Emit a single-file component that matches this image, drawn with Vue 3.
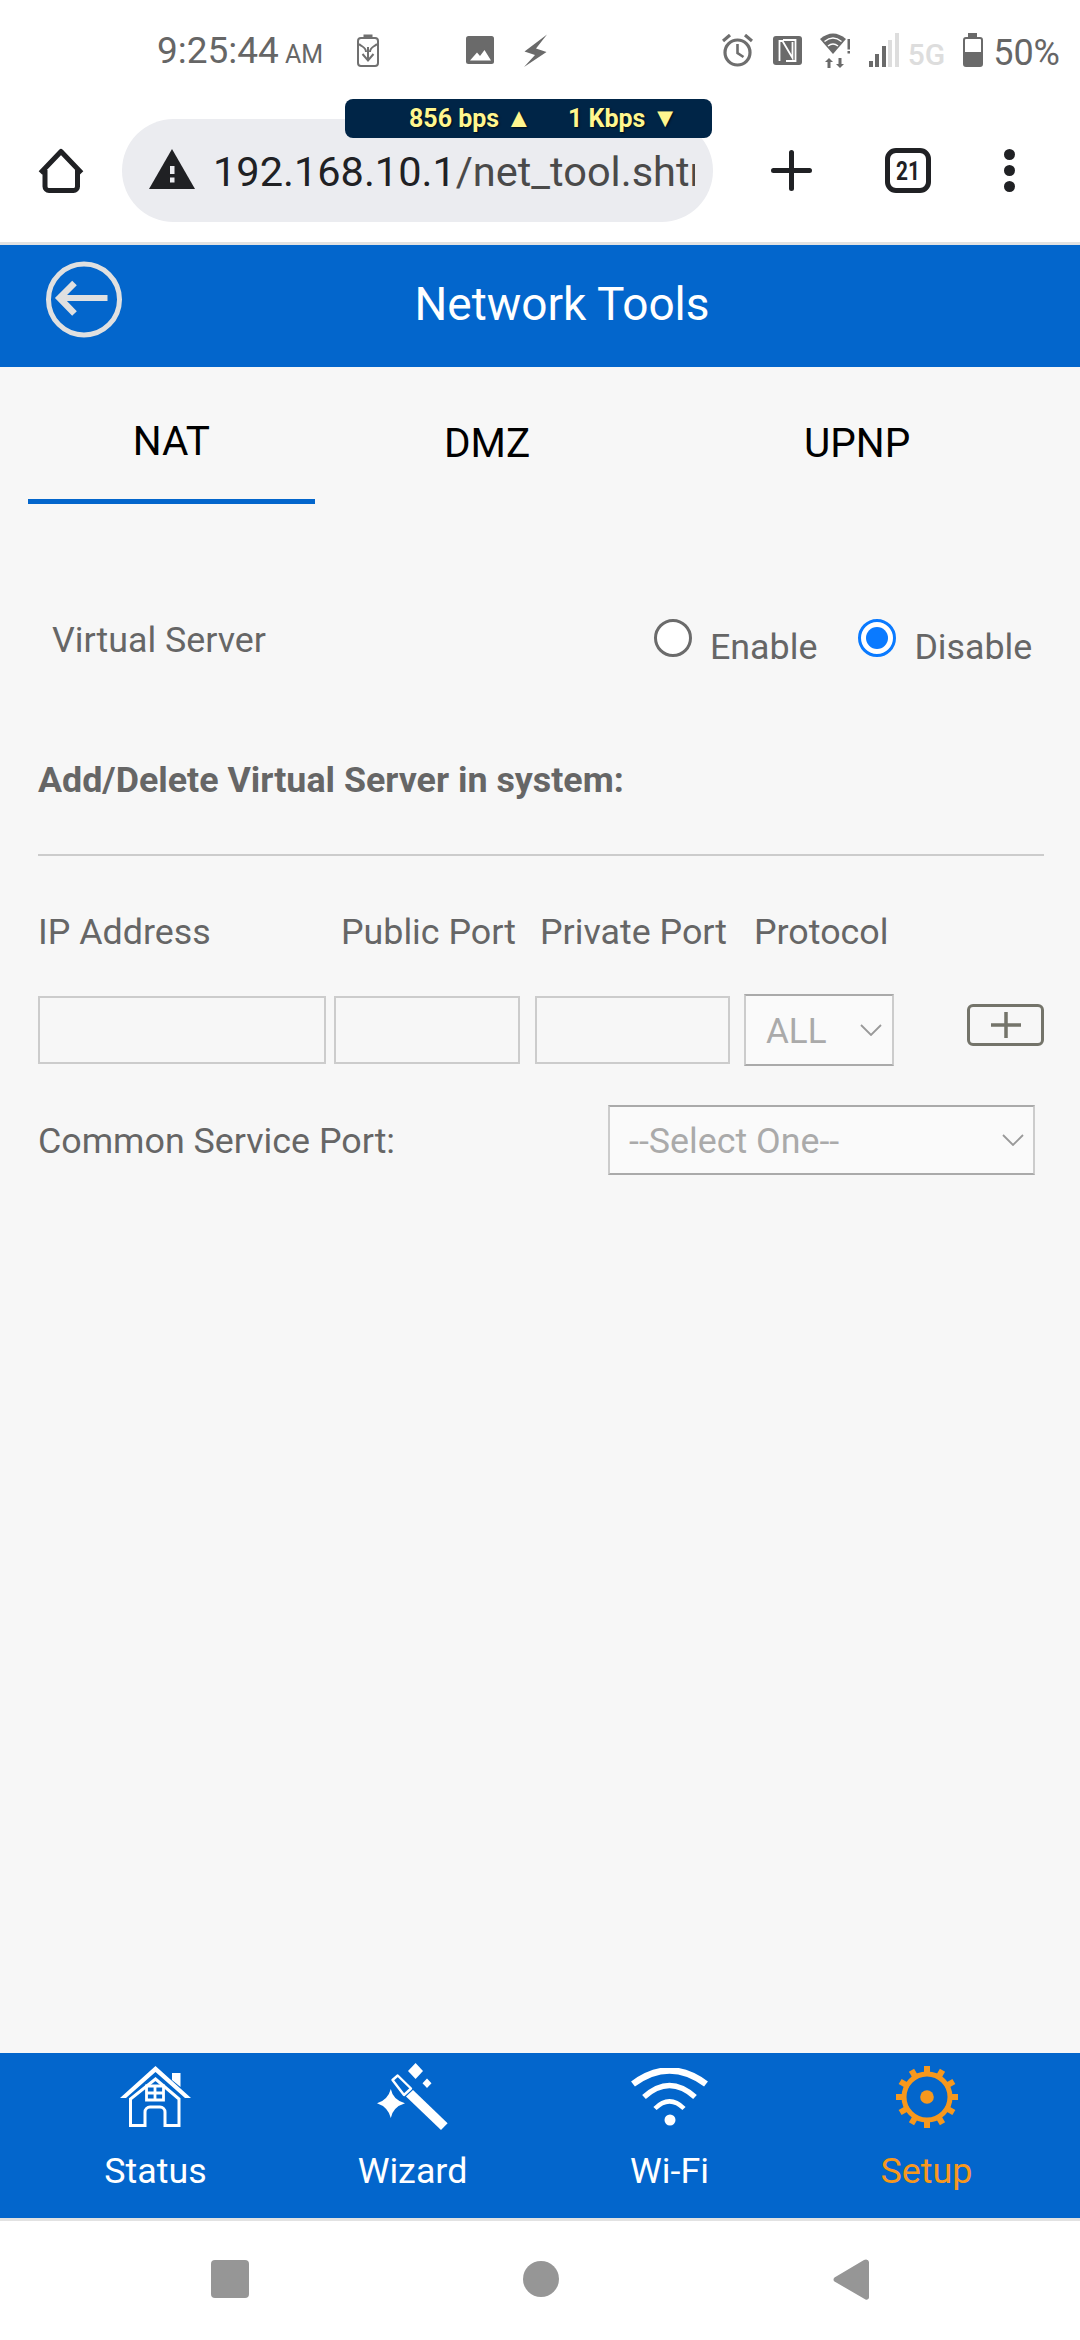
<script setup>
const teeth = Array.from({ length: 12 }, (_, i) => i * 30)
</script>

<template>
  <div class="app">
    <div class="status">
      <span class="time">9:25:44<small>AM</small></span>
      <svg class="i-saver" viewBox="0 0 22 33" fill="none" stroke="#707070" stroke-width="2">
        <rect x="1" y="4" width="20" height="28" rx="3" />
        <rect x="6.500" y="0.500" width="9" height="3.500" fill="#707070" stroke="none" />
        <path d="M2 10c3 3 7 3 7 8M20 10c-3 3-7 3-7 8" stroke-width="2" />
        <path d="M11 13v13M5.500 20l5.500 6.500 5.500-6.500" stroke-width="2" />
      </svg>
      <svg class="i-image" viewBox="0 0 28 28">
        <rect width="28" height="28" rx="2.500" fill="#6a6a6a" />
        <path d="M4 24.500L11 16.500L14 20L18.500 14L25 24.500z" fill="#fff" />
      </svg>
      <svg class="i-bolt" viewBox="0 0 23 33">
        <path d="M23 0.500L0.500 17.500L11 21L0 33L22.500 18L12 14.500z" fill="#6a6a6a" />
      </svg>
      <div class="grow"></div>
      <svg class="i-alarm" viewBox="0 0 31 33" fill="none" stroke="#6e6e6e">
        <circle cx="15.500" cy="18.500" r="12.500" stroke-width="3.200" />
        <path d="M15.500 10v9l6 4" stroke-width="2.600" />
        <path d="M1 7l7-6M30 7l-7-6" stroke-width="3.200" />
      </svg>
      <svg class="i-nfc" viewBox="0 0 29 29" fill="none">
        <rect width="29" height="29" rx="3" fill="#6a6a6a" />
        <path d="M6.500 25V5h3l10 17V6" stroke="#fff" stroke-width="1.800" />
        <path d="M10 4h12.500v21H13" stroke="#fff" stroke-width="1.800" />
      </svg>
      <svg class="i-wifi" viewBox="0 0 30 37">
        <path d="M0 7Q13 -4 26 7L13 22z" fill="#6a6a6a" />
        <path d="M4.500 9.500Q13 2.500 21.500 9.500M8 14Q13 10 18 14" stroke="#fff" stroke-width="1.500" fill="none" />
        <rect x="27.500" y="7" width="2.500" height="10.500" fill="#6a6a6a" />
        <rect x="27.500" y="19" width="2.500" height="2.500" fill="#6a6a6a" />
        <path d="M7.500 36v-6H5L9 26l4 4h-2.500v6zM18.500 26v6H16l4 4 4-4h-2.500v-6z" fill="#6a6a6a" />
      </svg>
      <div class="signal">
        <i class="b1"></i><i class="b2"></i><i class="b3"></i><i class="b4"></i><i class="b5"></i>
      </div>
      <span class="fiveg">5G</span>
      <div class="battery"><i></i></div>
      <span class="pct">50%</span>
    </div>

    <div class="toolbar">
      <svg class="i-home" viewBox="0 0 46 45" fill="none" stroke="#202124" stroke-width="5" stroke-linejoin="round">
        <path d="M7 22V38.500a4 4 0 0 0 4 4H35.500a4 4 0 0 0 4-4V22" />
        <path d="M2.500 25L23 3.500L43.500 25" />
      </svg>
      <div class="url">
        <svg class="i-warn" viewBox="0 0 46 40">
          <path d="M23 0L46 40H0z" fill="#202124" />
          <rect x="21" y="17" width="4.500" height="8" fill="#ebecf0" />
          <rect x="21" y="28.500" width="4.500" height="5" fill="#ebecf0" />
        </svg>
        <span class="url-text"><b>192.168.10.1</b>/net_tool.shtml</span>
      </div>
      <svg class="i-plus" viewBox="0 0 41 41">
        <path d="M20.500 2.500v36M2.500 20.500h36" stroke="#202124" stroke-width="5" stroke-linecap="round" />
      </svg>
      <div class="tabcount"><span>21</span></div>
      <div class="dots"><i></i><i></i><i></i></div>
      <div class="speed">
        <span class="up">856 bps <em>▲</em></span>
        <span class="down">1 Kbps <em>▼</em></span>
      </div>
    </div>

    <div class="header">
      <svg class="i-back" viewBox="0 0 76 77" fill="none" stroke="#e0e0e0">
        <circle cx="38" cy="38.500" r="35.500" stroke-width="5" />
        <path d="M13 37H61.500" stroke-width="6" />
        <path d="M28.500 22L13.500 37L28.500 52.500" stroke-width="6.500" />
      </svg>
      <div class="title">Network Tools</div>
    </div>

    <div class="body">
      <div class="tabs">
        <div class="tab tab-nat">NAT</div>
        <div class="tab tab-dmz">DMZ</div>
        <div class="tab tab-upnp">UPNP</div>
      </div>

      <div class="vs-row">
        <span class="vs-label">Virtual Server</span>
        <span class="radio"></span>
        <span class="radio-text">Enable</span>
        <span class="radio checked"><i></i></span>
        <span class="radio-text">Disable</span>
      </div>

      <div class="heading">Add/Delete Virtual Server in system:</div>
      <div class="divider"></div>

      <div class="labels">
        <span class="l-ip">IP Address</span>
        <span class="l-pub">Public Port</span>
        <span class="l-pri">Private Port</span>
        <span>Protocol</span>
      </div>

      <div class="inputs">
        <input class="in in-ip" type="text" />
        <input class="in in-pub" type="text" />
        <input class="in in-pri" type="text" />
        <div class="sel sel-all">
          <span>ALL</span>
          <svg class="chev" viewBox="0 0 22 12" fill="none" stroke="#999" stroke-width="1.800"><path d="M1 1l10 10L21 1" /></svg>
        </div>
        <div class="add">
          <svg viewBox="0 0 32 30" class="add-plus"><path d="M16 2v26M1 15h30" stroke="#74746a" stroke-width="3.500" /></svg>
        </div>
      </div>

      <div class="common">
        <span class="c-label">Common Service Port:</span>
        <div class="sel sel-one">
          <span>--Select One--</span>
          <svg class="chev" viewBox="0 0 22 12" fill="none" stroke="#999" stroke-width="1.800"><path d="M1 1l10 10L21 1" /></svg>
        </div>
      </div>
    </div>

    <div class="nav">
      <div class="nav-item">
        <div class="nav-icon">
          <svg class="n-house" viewBox="0 0 71 61" fill="#fff">
            <path d="M0 32L35.500 0L71 32H65L35.500 6L6 32z" />
            <path d="M52 7h8.500v14L52 14z" />
            <path d="M10.500 33V59.500H25V46a5 5 0 0 1 5-5h10a5 5 0 0 1 5 5V59.500H59V33L35.500 13z" fill="none" stroke="#fff" stroke-width="3" />
            <path d="M26.500 20h17v14h-17zM35 20v14M26.500 27h17" fill="none" stroke="#fff" stroke-width="2.800" />
          </svg>
        </div>
        <span>Status</span>
      </div>
      <div class="nav-item">
        <div class="nav-icon">
          <svg class="n-wand" viewBox="0 0 71 67" fill="#fff">
            <path d="M15.500 17L20.700 12.500L34 25.500L27 32z" fill="none" stroke="#fff" stroke-width="2.400" stroke-linejoin="round" />
            <path d="M29 33.500L36 27L70.600 60.300L64 67z" />
            <path d="M13.800 26Q16 37 28 40.300Q16 44 13.800 55Q11 44 0 40.300Q11 37 13.800 26z" />
            <path d="M38.600 0L46 8L38.600 16L31 8z" />
            <path d="M50 15.500L54.500 20.300L50 25L45.500 20.300z" />
          </svg>
        </div>
        <span>Wizard</span>
      </div>
      <div class="nav-item">
        <div class="nav-icon">
          <svg class="n-wifi" viewBox="0 0 77 58" fill="none" stroke="#fff" stroke-linecap="butt">
            <path d="M2 16Q38.500 -11 75 16" stroke-width="6.500" />
            <path d="M13 29Q38.500 6 64 29" stroke-width="5.500" />
            <path d="M24 40.500Q38.500 26 53 40.500" stroke-width="4.500" />
            <circle cx="39" cy="52" r="5.500" fill="#fff" stroke="none" />
          </svg>
        </div>
        <span>Wi-Fi</span>
      </div>
      <div class="nav-item active">
        <div class="nav-icon">
          <svg class="n-gear" viewBox="0 0 62 62" fill="none">
            <circle cx="31" cy="31" r="23" stroke="#f7981d" stroke-width="5" />
            <circle cx="31" cy="31" r="6.800" fill="#f7981d" />
            <rect v-for="a in teeth" :key="a" x="28" y="0" width="6" height="10" fill="#f7981d" :transform="`rotate(${a} 31 31)`" />
          </svg>
        </div>
        <span>Setup</span>
      </div>
    </div>

    <div class="sysbar">
      <div class="sq"></div>
      <div class="ci"></div>
      <svg class="tri" viewBox="0 0 36 41"><path d="M33 0.500a3 3 0 0 1 3 2.500v35a2.500 2.500 0 0 1-3.500 2.500L1.500 22.500a2.500 2.500 0 0 1 0-4L31 1z" fill="#969696" /></svg>
    </div>
  </div>
</template>

<style>
html, body { margin: 0; background: #fff; }
</style>

<style scoped>
.app {
  width: 1080px;
  height: 2340px;
  display: flex;
  flex-direction: column;
  overflow: hidden;
  font-family: Roboto, "Noto Sans", sans-serif;
  background: #fff;
}
.grow { flex: 1; }

/* status bar */
.status {
  height: 80px;
  box-sizing: border-box;
  padding: 20px 20px 0 157px;
  display: flex;
  align-items: center;
  color: #666;
}
.time { font-size: 37px; line-height: 60px; width: 200px; flex: none; padding-top: 6px; white-space: nowrap; }
.time small { font-size: 25px; margin-left: 6px; }
.i-saver { width: 22px; height: 33px; }
.i-image { width: 28px; height: 28px; margin-left: 87px; }
.i-bolt { width: 23px; height: 33px; margin-left: 30px; }
.i-alarm { width: 31px; height: 33px; }
.i-nfc { width: 29px; height: 29px; margin-left: 20px; }
.i-wifi { width: 30px; height: 37px; margin-left: 18px; }
.signal { display: flex; align-items: flex-end; gap: 2.500px; height: 34px; margin-left: 19px; width: 31px; }
.signal i { width: 4px; background: #6a6a6a; display: block; }
.signal .b1 { height: 6px; }
.signal .b2 { height: 13px; }
.signal .b3 { height: 21px; }
.signal .b4 { height: 27px; background: #ddd; }
.signal .b5 { height: 34px; background: #ddd; }
.fiveg { font-size: 30px; font-weight: 500; color: #ddd; margin-left: 8px; line-height: 40px; padding-top: 9px; }
.battery {
  width: 20px; height: 30px; margin-left: 18px; margin-top: 3px;
  box-sizing: border-box;
  border: 2.500px solid #6a6a6a; border-radius: 3px;
  position: relative; display: flex; align-items: flex-end;
}
.battery::before { content: ""; position: absolute; left: 3px; top: -6px; width: 9px; height: 4px; background: #6a6a6a; }
.battery i { display: block; width: 100%; height: 13px; background: #6a6a6a; }
.pct { font-size: 36px; margin-left: 10px; line-height: 60px; padding-top: 6px; }

/* browser toolbar */
.toolbar {
  height: 165px;
  box-sizing: border-box;
  padding: 39px 0 20px 38px;
  display: flex;
  align-items: center;
  position: relative;
  border-bottom: 3px solid #e2e2e2;
}
.i-home { width: 46px; height: 45px; flex: none; }
.url {
  width: 591px; height: 103px; margin-left: 38px;
  box-sizing: border-box;
  padding-left: 27px;
  border-radius: 52px;
  background: #ebecf0;
  display: flex; align-items: center;
  flex: none;
}
.i-warn { width: 46px; height: 40px; flex: none; margin-top: -4px; }
.url-text {
  font-size: 41.500px; margin-left: 18px; width: 482px; overflow: hidden; white-space: nowrap;
  color: #4a4a4a; line-height: 60px; padding-top: 2px; flex: none;
}
.url-text b { font-weight: 400; color: #202124; }
.i-plus { width: 41px; height: 41px; margin-left: 58px; flex: none; }
.tabcount {
  width: 46px; height: 45px; box-sizing: border-box; margin-left: 73px;
  border: 5px solid #202124; border-radius: 11px;
  font-weight: 700; font-size: 26px;
  color: #202124; display: flex; align-items: center; justify-content: center;
  flex: none;
}
.tabcount span { display: block; transform: scaleX(.8); }
.dots { display: flex; flex-direction: column; gap: 5px; margin-left: 73px; flex: none; }
.dots i { display: block; width: 11px; height: 11px; border-radius: 50%; background: #202124; }
.speed {
  position: absolute; left: 345px; top: 19px;
  width: 367px; height: 39px;
  border-radius: 8px;
  background: #002547;
  color: #fff68f;
  font-size: 25px; font-weight: 700;
  display: flex; align-items: center;
  line-height: 39px;
  text-shadow: 1px 1px 2px rgba(0,0,0,.7);
  box-sizing: border-box;
}
.speed em { font-style: normal; font-size: 27px; line-height: 0; }
.up { margin-left: 64px; width: 159px; white-space: nowrap; }
.down { white-space: nowrap; }

/* header */
.header {
  height: 122px;
  background: #0366cc;
  box-sizing: border-box;
  padding: 16px 78px 0 46px;
  display: flex;
  align-items: flex-start;
  flex: none;
}
.i-back { width: 76px; height: 77px; flex: none; }
.title {
  flex: 1; text-align: center; color: #fff; font-size: 46px; line-height: 50px; margin-top: 18px;
}

/* page */
.body { flex: 1; background: #f7f7f7; color: #666; font-size: 35.800px; }
.tabs { display: flex; margin: 0 25px 0 28px; color: #000; font-size: 40.500px; }
.tab { height: 137px; box-sizing: border-box; padding-top: 44px; line-height: 60px; text-align: center; }
.tab-nat { width: 287px; border-bottom: 5px solid #0366cc; }
.tab-dmz { width: 345px; padding-top: 46px; }
.tab-upnp { width: 396px; padding-top: 46px; }

.vs-row { display: flex; align-items: center; height: 60px; margin-top: 106px; padding-left: 52px; line-height: 60px; }
.vs-label { width: 602px; flex: none; }
.radio {
  width: 38px; height: 38px; box-sizing: border-box; flex: none;
  border: 3px solid #6b6b6b; border-radius: 50%; background: #fff;
  margin-top: -4px;
  display: flex; align-items: center; justify-content: center;
}
.radio.checked { border-color: #0a7aff; margin-left: 41px; }
.radio.checked i { display: block; width: 22px; height: 22px; border-radius: 50%; background: #0a7aff; }
.radio-text { margin-left: 18px; padding-top: 14px; }

.heading { font-weight: 700; line-height: 60px; margin-top: 80px; padding-left: 38px; }
.divider { height: 2px; background: #ccc; margin: 44px 36px 0 38px; }
.labels { display: flex; line-height: 60px; margin-top: 46px; padding-left: 38px; }
.l-ip { width: 303px; }
.l-pub { width: 199px; }
.l-pri { width: 214px; }

.inputs { display: flex; align-items: center; height: 72px; margin-top: 32px; padding-left: 38px; }
.in {
  height: 68px; box-sizing: border-box; margin: 0; padding: 0;
  border: 2px solid #ccc; background: #f7f7f7; border-radius: 0; outline: none;
  flex: none;
}
.in-ip { width: 288px; }
.in-pub { width: 186px; margin-left: 8px; }
.in-pri { width: 195px; margin-left: 15px; }
.sel {
  box-sizing: border-box; background: #fafafa; color: #aaa;
  border-style: solid; border-color: #aaa #ccc; border-width: 2px;
  display: flex; align-items: center; justify-content: space-between;
  flex: none;
}
.sel-all { width: 150px; height: 72px; margin-left: 14px; padding: 0 10px 0 20px; font-size: 35px; }
.sel-all span { padding-top: 2px; }
.chev { width: 22px; height: 12px; flex: none; }
.add {
  width: 77px; height: 42px; box-sizing: border-box; margin-left: 73px; margin-top: -10px;
  border: 3.500px solid #74746a; border-radius: 6px;
  display: flex; align-items: center; justify-content: center; overflow: visible;
  flex: none;
}
.add-plus { width: 32px; height: 30px; flex: none; }

.common { display: flex; align-items: center; height: 70px; margin-top: 39px; padding-left: 38px; }
.c-label { width: 570px; flex: none; padding-top: 2px; }
.sel-one { width: 427px; height: 70px; padding: 0 9px 0 19px; }
.sel-one span { padding-top: 2px; }

/* bottom nav */
.nav {
  height: 168px; box-sizing: border-box; flex: none;
  background: #0366cc; border-bottom: 3px solid #e2e2e2;
  display: grid; grid-template-columns: repeat(4, 257px);
  padding: 10px 0 0 27px;
}
.nav-item { display: flex; flex-direction: column; align-items: center; color: #fff; font-size: 35.800px; line-height: 40px; }
.nav-item.active { color: #f7981d; }
.nav-icon { height: 67px; display: flex; align-items: center; justify-content: center; margin-bottom: 21px; }
.n-house { width: 71px; height: 61px; }
.n-wand { width: 71px; height: 67px; }
.n-wifi { width: 77px; height: 58px; }
.n-gear { width: 62px; height: 62px; }

/* system bar */
.sysbar {
  height: 119px; flex: none; background: #fff;
  box-sizing: border-box; padding: 0 0 3px 0;
  display: flex; align-items: center; justify-content: center; gap: 274px;
}
.sq { width: 38px; height: 38px; border-radius: 4px; background: #969696; }
.ci { width: 36px; height: 36px; border-radius: 50%; background: #969696; }
.tri { width: 36px; height: 41px; }
</style>
